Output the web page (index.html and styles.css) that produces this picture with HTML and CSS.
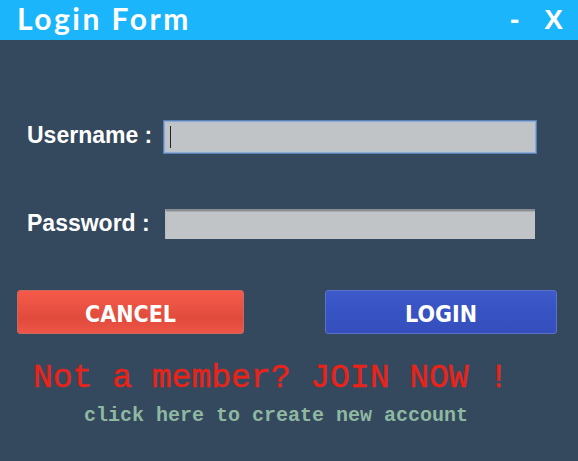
FILE: index.html
```html
<!DOCTYPE html>
<html>
<head>
<meta charset="utf-8">
<title>Login Form</title>
<link rel="stylesheet" href="styles.css">
</head>
<body>
<div class="window">
  <div class="titlebar">
    <div class="title">Login Form</div>
    <div class="controls">
      <span class="ctl min">-</span>
      <span class="ctl close">X</span>
    </div>
  </div>
  <div class="form">
    <div class="row row-user">
      <label class="label">Username :</label>
      <div class="field field-focus"><span class="caret"></span></div>
    </div>
    <div class="row row-pass">
      <label class="label">Password :</label>
      <div class="field field-pass"></div>
    </div>
    <div class="buttons">
      <button class="btn btn-cancel">CANCEL</button>
      <button class="btn btn-login">LOGIN</button>
    </div>
    <div class="join">Not a member? JOIN NOW !</div>
    <div class="create">click here to create new account</div>
  </div>
</div>
</body>
</html>
```
FILE: styles.css
```css
html, body {
  margin: 0;
  padding: 0;
}
body {
  background: #34495e;
  width: 578px;
  height: 461px;
  overflow: hidden;
}
.window {
  width: 578px;
  height: 461px;
  background: #34495e;
}
.titlebar {
  height: 40px;
  background: #1bb5fc;
  display: flex;
  align-items: flex-start;
  padding-left: 17px;
  box-sizing: border-box;
}
.title {
  font-family: Lato, "Open Sans", sans-serif;
  font-weight: 700;
  font-size: 30px;
  letter-spacing: 2.5px;
  color: #ffffff;
  line-height: normal;
}
.controls {
  margin-left: auto;
  display: flex;
  align-items: center;
  font-family: "Liberation Sans", Arial, sans-serif;
  font-weight: bold;
  font-size: 28px;
  color: #ffffff;
  line-height: 40px;
}
.ctl.min {
  margin-right: 25px;
}
.ctl.close {
  margin-right: 15px;
}
.form {
  padding-top: 80px;
}
.row {
  display: flex;
  align-items: center;
}
.label {
  font-family: "Liberation Sans", Arial, sans-serif;
  font-weight: bold;
  font-size: 23px;
  color: #ffffff;
  padding-left: 27px;
  box-sizing: border-box;
}
.row-user {
  height: 34px;
}
.row-user .label {
  width: 163px;
  margin-top: -4px;
}
.row-pass {
  height: 30px;
  margin-top: 55px;
}
.row-pass .label {
  width: 165px;
  margin-top: -1px;
}
.field {
  background: #c0c4c7;
  box-sizing: border-box;
  position: relative;
}
.field-focus {
  width: 374px;
  height: 34px;
  border: 1px solid #5b80b6;
  box-shadow: inset 0 0 0 1px #8fa9cf, inset 0 0 0 2px #b7c3d3;
}
.caret {
  position: absolute;
  left: 6px;
  top: 5px;
  width: 1px;
  height: 22px;
  background: #1e2328;
}
.field-pass {
  width: 370px;
  height: 30px;
  border-top: 2px solid #898d91;
  border-left: 1px solid #b9bdc0;
  box-shadow: inset 0 1px 0 #a9adb1;
}
.buttons {
  display: flex;
  margin-top: 51px;
}
.btn {
  height: 44px;
  border-radius: 3px;
  font-family: "DejaVu Sans Condensed", "DejaVu Sans", Tahoma, sans-serif;
  font-stretch: condensed;
  font-weight: bold;
  font-size: 23px;
  color: #ffffff;
  padding: 3px 0 0 0;
  box-sizing: border-box;
  cursor: pointer;
}
.btn-cancel {
  width: 227px;
  margin-left: 17px;
  border: 1px solid #c9695e;
  background: linear-gradient(to bottom, #f5594a 0%, #ea5343 35%, #e14b3b 65%, #ee5546 100%);
}
.btn-login {
  width: 232px;
  margin-left: 81px;
  border: 1px solid #5a72c9;
  background: linear-gradient(to bottom, #3e5acb 0%, #3752c2 50%, #3550bd 100%);
}
.join {
  font-family: "Liberation Mono", "Courier New", monospace;
  font-size: 33px;
  color: #ea2319;
  margin-top: 25px;
  margin-left: 33px;
  line-height: 40px;
  white-space: pre;
  -webkit-text-stroke: 0.4px #ea2319;
}
.create {
  font-family: "Liberation Mono", "Courier New", monospace;
  font-weight: bold;
  font-size: 20px;
  color: #8fb8a1;
  margin-left: 84px;
  margin-top: 5px;
  line-height: 24px;
  white-space: pre;
}
```
